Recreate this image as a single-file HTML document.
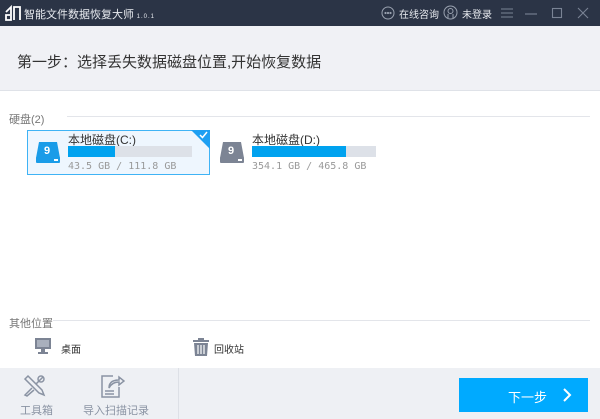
<!DOCTYPE html>
<html><head><meta charset="utf-8"><style>
*{margin:0;padding:0;box-sizing:border-box}
body{width:600px;height:419px;overflow:hidden;background:#fff;font-family:"Liberation Sans","Noto Sans CJK SC",sans-serif;position:relative}
.a{position:absolute}
.t{white-space:nowrap}
</style></head><body>
<div class="a" style="left:0;top:0;width:600px;height:26px;background:#2b3446"></div>
<svg class="a" style="left:4px;top:4px" width="18" height="18" viewBox="0 0 18 18" fill="none" stroke="#fff" stroke-width="1.8"><path d="M2 8 L7 3 L7 16 L2 16 L2 11 L6 11"/><path d="M10 16 V3 H16 V16"/></svg>
<div class="a t" style="left:24px;top:6px;font-size:11px;color:#e8ebf0">智能文件数据恢复大师<span style="font-size:6px;letter-spacing:1px"> 1.0.1</span></div>
<svg class="a" style="left:381px;top:6px" width="14" height="14" viewBox="0 0 14 14" fill="none" stroke="#9aa2b0" stroke-width="1"><circle cx="7" cy="7" r="6"/><circle cx="4.5" cy="7" r=".6"/><circle cx="7" cy="7" r=".6"/><circle cx="9.5" cy="7" r=".6"/></svg>
<div class="a t" style="left:399px;top:6px;font-size:10px;color:#e8ebf0">在线咨询</div>
<svg class="a" style="left:443px;top:5px" width="15" height="15" viewBox="0 0 15 15" fill="none" stroke="#9aa2b0"><circle cx="7.5" cy="7.5" r="6.5"/><circle cx="7.5" cy="6" r="2.5"/><path d="M5 13 V9 M10 13 V9"/></svg>
<div class="a t" style="left:462px;top:6px;font-size:10px;color:#e8ebf0">未登录</div>
<svg class="a" style="left:500px;top:6px" width="90" height="14" viewBox="0 0 90 14" fill="none" stroke="#7a8394" stroke-width="1.1"><path d="M1 3H13M1 7H13M1 11H13"/><path d="M25 8H37"/><rect x="52.5" y="2.5" width="9" height="9"/><path d="M78 2L88 12M88 2L78 12"/></svg>
<div class="a" style="left:0;top:26px;width:600px;height:65px;background:#f0f1f5;border-bottom:1px solid #dfe2e8"></div>
<div class="a t" style="left:17px;top:51px;font-size:15px;color:#333">第一步：选择丢失数据磁盘位置,开始恢复数据</div>
<div class="a t" style="left:9px;top:111px;font-size:11px;color:#777">硬盘(2)</div>
<div class="a" style="left:67px;top:116px;width:523px;height:1px;background:#e3e5ea"></div>
<div class="a" style="left:27px;top:130px;width:183px;height:45px;background:#eef6fe;border:1px solid #3fb3f5"></div>
<div class="a" style="left:191px;top:130px;width:0;height:0;border-top:19px solid #1e9ff2;border-left:19px solid transparent"></div>
<svg class="a" style="left:199px;top:131px" width="9" height="8" viewBox="0 0 9 8" fill="none" stroke="#fff" stroke-width="1.5"><path d="M1 4L3.5 6.5L8 1"/></svg>
<svg class="a" style="left:35px;top:140px" width="26" height="24" viewBox="0 0 26 24"><path d="M4 2H22L25 18H1Z" fill="#1a9ce8"/><rect x="1" y="17" width="24" height="6" rx="1" fill="#1a9ce8"/><text x="9" y="14" font-size="11" font-weight="bold" fill="#fff" font-family="Liberation Sans">9</text><rect x="19" y="19" width="4" height="2" fill="#fff"/></svg>
<div class="a t" style="left:68px;top:131px;font-size:12px;color:#333">本地磁盘(C:)</div>
<div class="a" style="left:68px;top:146px;width:124px;height:11px;background:#dde1e8"></div>
<div class="a" style="left:68px;top:146px;width:47px;height:11px;background:#00a2ef"></div>
<div class="a t" style="left:68px;top:161px;font-size:10px;color:#999;font-family:'DejaVu Sans Mono',monospace">43.5 GB / 111.8 GB</div>
<svg class="a" style="left:219px;top:140px" width="26" height="24" viewBox="0 0 26 24"><path d="M4 2H22L25 18H1Z" fill="#7c8494"/><rect x="1" y="17" width="24" height="6" rx="1" fill="#7c8494"/><text x="9" y="14" font-size="11" font-weight="bold" fill="#fff" font-family="Liberation Sans">9</text><rect x="19" y="19" width="4" height="2" fill="#fff"/></svg>
<div class="a t" style="left:252px;top:131px;font-size:12px;color:#333">本地磁盘(D:)</div>
<div class="a" style="left:252px;top:146px;width:124px;height:11px;background:#dde1e8"></div>
<div class="a" style="left:252px;top:146px;width:94px;height:11px;background:#00a2ef"></div>
<div class="a t" style="left:252px;top:161px;font-size:10px;color:#999;font-family:'DejaVu Sans Mono',monospace">354.1 GB / 465.8 GB</div>
<div class="a t" style="left:9px;top:315px;font-size:11px;color:#777">其他位置</div>
<div class="a" style="left:53px;top:320px;width:537px;height:1px;background:#e3e5ea"></div>
<svg class="a" style="left:34px;top:337px" width="18" height="18" viewBox="0 0 18 18"><rect x="1" y="1" width="16" height="11" fill="#7c8494"/><rect x="3" y="3" width="12" height="7" fill="#a9b0bd"/><rect x="7" y="12" width="4" height="3" fill="#7c8494"/><rect x="4" y="15" width="10" height="2" fill="#7c8494"/></svg>
<div class="a t" style="left:61px;top:341px;font-size:10px;color:#333">桌面</div>
<svg class="a" style="left:192px;top:337px" width="18" height="20" viewBox="0 0 18 20" fill="#7c8494"><rect x="1" y="3" width="16" height="2"/><rect x="6" y="1" width="6" height="2"/><path d="M2 6H16L15 19H3Z"/><path d="M6 8V17M9 8V17M12 8V17" stroke="#fff" stroke-width="1.2"/></svg>
<div class="a t" style="left:214px;top:341px;font-size:10px;color:#333">回收站</div>
<div class="a" style="left:0;top:368px;width:600px;height:51px;background:#eef0f4"></div>
<div class="a" style="left:178px;top:368px;width:1px;height:51px;background:#dde0e6"></div>
<svg class="a" style="left:22px;top:374px" width="24" height="24" viewBox="0 0 24 24" fill="none" stroke="#8a93a3" stroke-width="1.5"><path d="M3 5L6 2L20 16L22 21L17 19L3 5Z"/><path d="M21 3L14 10M10 14L3 21L5 22L12 16"/><circle cx="19" cy="5" r="3"/></svg>
<div class="a t" style="left:20px;top:402px;font-size:11px;color:#8a93a3">工具箱</div>
<svg class="a" style="left:99px;top:373px" width="26" height="26" viewBox="0 0 26 26" fill="none" stroke="#8a93a3" stroke-width="1.5"><path d="M14 3H3V24H20V14"/><path d="M6 18H15M6 21H15"/><path d="M10 15C10 9 14 7 20 7V4L25 8L20 12V9C15 9 12 11 10 15Z"/></svg>
<div class="a t" style="left:83px;top:402px;font-size:11px;color:#8a93a3">导入扫描记录</div>
<div class="a" style="left:459px;top:378px;width:129px;height:34px;background:#00aaff"></div>
<div class="a t" style="left:508px;top:387px;font-size:13px;color:#fff">下一步</div>
<svg class="a" style="left:562px;top:388px" width="10" height="14" viewBox="0 0 10 14" fill="none" stroke="#fff" stroke-width="2"><path d="M2 1L8 7L2 13"/></svg>
</body></html>
